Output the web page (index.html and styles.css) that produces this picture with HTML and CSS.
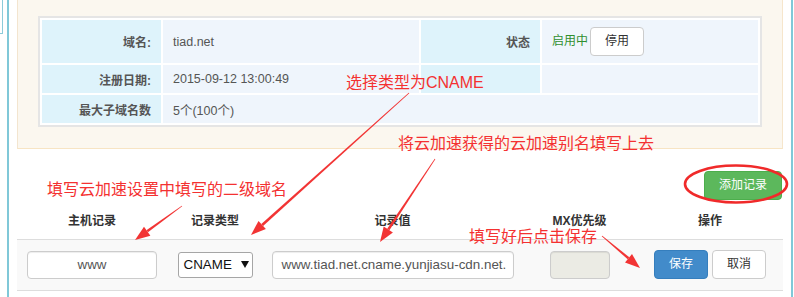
FILE: index.html
```html
<!DOCTYPE html>
<html lang="zh-CN">
<head>
<meta charset="utf-8">
<title>域名记录</title>
<link rel="stylesheet" href="styles.css">
</head>
<body>
<div class="page">
  <div class="stub"></div>
  <div class="frame">
    <section class="info-panel">
      <table class="info">
        <tr class="r1">
          <th>域名:</th>
          <td>tiad.net</td>
          <th>状态</th>
          <td><span class="ok">启用中</span><button class="btn btn-default">停用</button></td>
        </tr>
        <tr class="r2">
          <th>注册日期:</th>
          <td>2015-09-12 13:00:49</td>
          <th></th>
          <td></td>
        </tr>
        <tr class="r3">
          <th>最大子域名数</th>
          <td colspan="3">5个(100个)</td>
        </tr>
      </table>
    </section>

    <div class="toolbar"><button class="btn btn-success">添加记录</button></div>

    <div class="grid head">
      <div>主机记录</div>
      <div>记录类型</div>
      <div>记录值</div>
      <div>MX优先级</div>
      <div>操作</div>
    </div>
    <div class="grid row">
      <div><div class="field host">www</div></div>
      <div><div class="select">CNAME<svg class="caret" width="8" height="7" viewBox="0 0 8 7"><polygon points="0,0 8,0 4,7" fill="#111"/></svg></div></div>
      <div><div class="field value">www.tiad.net.cname.yunjiasu-cdn.net.</div></div>
      <div><div class="field mx"></div></div>
      <div class="ops"><button class="btn btn-primary">保存</button><button class="btn btn-default">取消</button></div>
    </div>
  </div>

  <svg class="marks" width="794" height="297" viewBox="0 0 794 297">
    <g fill="#f23434">
      <polygon points="409.3,93.3 408.7,92.7 261.3,224.0 263.1,226.0"/>
      <polygon points="251,235 265.9,229.1 258.5,220.9"/>
      <polygon points="182.2,206.3 181.8,205.7 146.4,230.2 148.0,232.3"/>
      <polygon points="135,240 150.4,235.7 144.0,226.7"/>
      <polygon points="435.3,159.2 434.7,158.8 387.2,228.8 389.4,230.2"/>
      <polygon points="380,242 392.9,232.5 383.7,226.5"/>
      <polygon points="601.7,236.3 602.3,235.7 629.3,257.3 627.7,259.3"/>
      <polygon points="640,268 625.0,262.5 632.0,254.1"/>
    </g>
    <ellipse cx="736" cy="184" rx="51" ry="18.5" fill="none" stroke="#f02a2a" stroke-width="2.6"/>
  </svg>
  <div class="note n1">选择类型为CNAME</div>
  <div class="note n2">将云加速获得的云加速别名填写上去</div>
  <div class="note n3">填写云加速设置中填写的二级域名</div>
  <div class="note n4">填写好后点击保存</div>
</div>
</body>
</html>
```

FILE: styles.css
```css
* { box-sizing: border-box; }
html, body { margin: 0; padding: 0; background: #fff; }
body {
  width: 794px;
  height: 297px;
  overflow: hidden;
  font-family: "Liberation Sans", "Noto Sans CJK SC", sans-serif;
  font-size: 12px;
  color: #555;
}
.page {
  position: relative;
  display: flex;
  align-items: flex-start;
  width: 794px;
  height: 297px;
}
.stub {
  width: 3px;
  height: 34px;
  border-right: 1px solid #8ccbd9;
  border-bottom: 1px solid #8ccbd9;
  flex: none;
}
.frame {
  margin-left: 4px;
  width: 786px;
  height: 297px;
  border-left: 2px solid #80c8d8;
  border-right: 2px solid #80c8d8;
  padding: 0 8px;
  flex: none;
}

/* info panel */
.info-panel {
  background: #fbf7ef;
  border-left: 1px solid #f3e5cf;
  border-right: 1px solid #f6e6cc;
  border-bottom: 1px solid #f7e4c3;
  padding: 16px 20px 21px 20px;
  height: 149px;
}
.info {
  width: 724px;
  border: 2px solid #e5e5e5;
  border-spacing: 2px;
  background: #fff;
  table-layout: fixed;
}
.info th, .info td { padding: 0; }
.info th {
  width: 119px;
  background: #def3fb;
  text-align: right;
  padding-right: 10px;
  font-weight: bold;
  color: #555;
  font-size: 12px;
}
.info td {
  background: #eff5fc;
  padding-left: 10px;
  font-size: 12.5px;
  color: #555;
}
.info tr.r1 th:first-child + td { width: 256px; }
.info .r1 { height: 43px; }
.info .r2, .info .r3 { height: 28px; }
.ok { color: #2f8f2f; margin-right: 2px; font-size: 12px; }

/* buttons */
.btn {
  font-family: "Liberation Sans", "Noto Sans CJK SC", sans-serif;
  font-size: 12px;
  height: 29px;
  padding: 0 15px;
  border-radius: 4px;
  border: 1px solid #ccc;
  background: #fff;
  color: #333;
  line-height: 27px;
  vertical-align: middle;
  cursor: pointer;
}
.info .btn { width: 54px; padding: 0; }
.btn-success { background: #5cb85c; border-color: #4cae4c; color: #fff; width: 78px; padding: 0; }
.btn-primary { background: #428bca; border-color: #357ebd; color: #fff; }
.ops .btn { width: 54px; padding: 0; }

.toolbar {
  display: flex;
  justify-content: flex-end;
  padding-top: 22px;
  padding-right: 1px;
}

/* record grid */
.grid {
  display: grid;
  grid-template-columns: 150px 96px 259px 115px 146px;
  width: 766px;
}
.grid > div {
  display: flex;
  justify-content: center;
  align-items: center;
}
.head {
  padding: 12px 0 9px;
  line-height: 18px;
  font-weight: bold;
  color: #333;
  font-size: 12px;
}
.row {
  background: #f9f9f9;
  border-top: 1px solid #ddd;
  border-bottom: 1px solid #ddd;
  padding: 10px 0 11px;
}
.field {
  height: 28px;
  background: #fff;
  border: 1px solid #ccc;
  border-radius: 4px;
  box-shadow: inset 0 1px 1px rgba(0,0,0,0.075);
  color: #555;
  font-size: 13.4px;
  line-height: 26px;
  white-space: nowrap;
  overflow: hidden;
}
.host { width: 130px; text-align: center; }
.value { width: 242px; padding-left: 9px; }
.mx { width: 60px; background: #ebebe4; }
.select {
  width: 75px;
  height: 26px;
  border: 1px solid #a6a6a6;
  border-radius: 3px;
  background: #fff;
  color: #111;
  font-size: 13.4px;
  line-height: 24px;
  padding-left: 5px;
  display: flex;
  align-items: center;
  gap: 9px;
}
.caret { display: block; }
.ops { gap: 4px; }

/* overlays */
.marks {
  position: absolute;
  left: 0;
  top: 0;
  pointer-events: none;
}
.note {
  position: absolute;
  color: #f43131;
  font-size: 16px;
  line-height: 16px;
  white-space: nowrap;
  font-family: "Liberation Sans", "Noto Sans CJK SC", sans-serif;
}
.n1 { left: 346px; top: 75px; }
.n2 { left: 398px; top: 136px; }
.n3 { left: 47px; top: 182px; }
.n4 { left: 469px; top: 229px; }
```
